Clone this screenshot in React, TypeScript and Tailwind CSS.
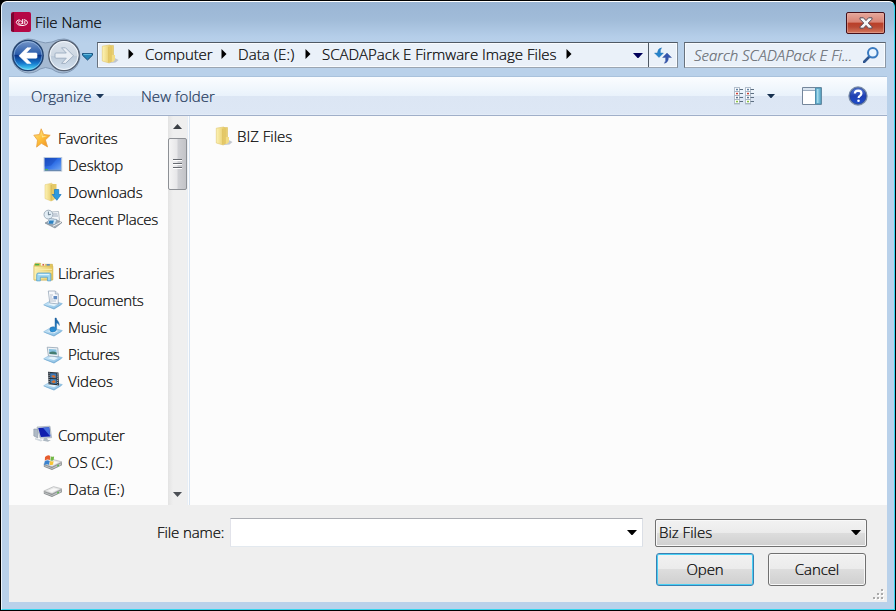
import type { ReactNode } from "react";

const P = ({ size = 20, children, className = "" }: { size?: number; children: ReactNode; className?: string }) => (
  <svg width={size} height={size} viewBox="0 0 20 20" className={"shrink-0 " + className}>
    {children}
  </svg>
);

const Defs = () => (
  <svg width="0" height="0" className="absolute">
    <defs>
      <linearGradient id="yellow" x1="0" x2="1">
        <stop offset="0" stopColor="#fdf3b5" />
        <stop offset="1" stopColor="#e3c45c" />
      </linearGradient>
      <linearGradient id="screen" x1="0" x2="1" y2="1">
        <stop offset="0" stopColor="#1c4fc4" />
        <stop offset="0.5" stopColor="#2f6fe6" />
        <stop offset="1" stopColor="#6fa6f5" />
      </linearGradient>
      <linearGradient id="star" x1="0" x2="1" y2="1">
        <stop offset="0" stopColor="#ffe98a" />
        <stop offset="0.5" stopColor="#fdbe3a" />
        <stop offset="1" stopColor="#f08a1c" />
      </linearGradient>
      <linearGradient id="tray" x1="0" x2="1" y2="1">
        <stop offset="0" stopColor="#d9effb" />
        <stop offset="1" stopColor="#7fb9e2" />
      </linearGradient>
      <linearGradient id="note" x1="0" x2="0" y2="1">
        <stop offset="0" stopColor="#1e5f9f" />
        <stop offset="1" stopColor="#2b95dc" />
      </linearGradient>
      <linearGradient id="orb" x1="0" x2="0" y2="1">
        <stop offset="0" stopColor="#7898c8" />
        <stop offset="0.46" stopColor="#2a5cab" />
        <stop offset="0.5" stopColor="#0b3488" />
        <stop offset="0.75" stopColor="#1578cd" />
        <stop offset="1" stopColor="#55e8ff" />
      </linearGradient>
      <linearGradient id="orbOff" x1="0" x2="0" y2="1">
        <stop offset="0" stopColor="#dbe3ec" />
        <stop offset="0.5" stopColor="#cdd7e2" />
        <stop offset="0.52" stopColor="#bccad9" />
        <stop offset="1" stopColor="#d5e2f0" />
      </linearGradient>
      <linearGradient id="help" x1="0" x2="0" y2="1">
        <stop offset="0" stopColor="#5e82dc" />
        <stop offset="0.5" stopColor="#1f3fb2" />
        <stop offset="1" stopColor="#1d4fd0" />
      </linearGradient>
    </defs>
  </svg>
);

const Folder = () => (
  <P>
    <path d="M11 12l7.5 4-3 2.5-5.5.5z" fill="#b0b7c1" opacity=".75" />
    <path d="M9 1.5h4.5V16l-3 1.5z" fill="#e9cf70" stroke="#d6b956" strokeWidth=".5" />
    <path d="M11 11h4v5l-2 2h-2z" fill="#f3dd86" />
    <path d="M2.3 2.2L9.5 1l2 1.6v14.8L9.2 19 2.3 17z" fill="url(#yellow)" stroke="#e0c66d" strokeWidth=".6" />
    <path d="M8.8 2.8V18.5" stroke="#d3b348" strokeWidth=".8" opacity=".7" />
  </P>
);
const Tray = () => (
  <>
    <path d="M1 15.6l7-4 11 3-8 5z" fill="#82b4d8" />
    <path d="M.6 14.8l7.4-4.3 11.4 3.1-8.4 5z" fill="url(#tray)" stroke="#79afd4" strokeWidth=".5" />
    <path d="M5 14.3l4-2.1 6 1.8-4 2.3z" fill="#f3fbff" opacity=".8" />
  </>
);

const icons: Record<string, ReactNode> = {
  star: <P><path d="M8.2.8l2.4 5.6 6.6.9-4.8 4.6 2.2 7-6.2-3.6-4.8 3.8.9-7L.8 7.2l5.6-.6z" fill="url(#star)" stroke="#e8a03e" strokeWidth=".8" /><path d="M8.4 3L9.6 8l4.6.5-5.2 1z" fill="#fff4b8" opacity=".7" /></P>,
  desktop: <P><rect x=".6" y="2" width="18.6" height="14.6" fill="#b9c9dc" /><rect x="1.7" y="3" width="16.4" height="11.8" fill="url(#screen)" /><path d="M1.7 3h13L8 10.4l-6.3 1z" fill="#143fae" opacity=".35" /><path d="M1.7 14.8h16.4v1H1.7z" fill="#557aa6" /><path d="M2 13.9h3v1.3H2z" fill="#50b266" /></P>,
  downloads: <P><path d="M9 2h4.5v14l-3 2z" fill="#e5ca69" /><path d="M2 2.7L8.5 1.2 10.5 3v15L8 19l-6-2.4z" fill="url(#yellow)" stroke="#e0c66d" strokeWidth=".5" /><path d="M8.2 3V18.5" stroke="#c9aa49" strokeWidth=".7" /><path d="M11.5 7.5h4.2v5h2.4l-4.3 5.8-4.6-5.8h2.3z" fill="#2c9ae1" stroke="#1776bd" strokeWidth=".7" /></P>,
  recent: <P><path d="M7 3l8.5-.5 1 9-8 1.5z" fill="#f4f7fa" stroke="#9aa6b3" strokeWidth=".7" /><path d="M10 5h4.5M10 7h5" stroke="#9caabc" /><circle cx="5.4" cy="5.6" r="4.4" fill="#e2edf5" stroke="#9aa8b6" strokeWidth=".9" /><path d="M5.4 2.6v3.3l2.4-.6" stroke="#5e7384" strokeWidth=".9" fill="none" /><path d="M2 14l8-4 9 3.5-7 5.5z" fill="#a2acb6" stroke="#6e7a86" strokeWidth=".6" /><path d="M4 14.5l2.5-5 7.5 1-2 5z" fill="#d2e6f4" stroke="#7a90a6" strokeWidth=".6" /><path d="M6.3 11.5h4.6l-.9 3.2H5.5z" fill="#2d81c1" /><path d="M10 17.2l8-4" stroke="#eee" /></P>,
  libraries: <P size={21}><path d="M1 3.2l1-2h5l1 1h10.5v15H1z" fill="#e5c961" stroke="#c9aa42" strokeWidth=".6" /><path d="M2 1.8h4v1.5H2z" fill="#45b34c" /><path d="M7.5 2h4v1.5h-4z" fill="#fff" /><path d="M9 2h1.6v1.4H9z" fill="#ce493b" /><path d="M13 2h3v1.5h-3z" fill="#5488cc" /><path d="M1 4h18v13H1z" fill="url(#yellow)" stroke="#d7b855" strokeWidth=".5" /><path d="M2 7h16M2 9.5h16" stroke="#f8eaa6" /><path d="M5 10.5h10.5q1.5 0 1.5 1.5v6h-3.2v-3.5H7V18H3.5v-6q0-1.5 1.5-1.5z" fill="#9bd4ef" stroke="#559fc9" strokeWidth=".7" /><path d="M5 12h10.5" stroke="#e2f7ff" /></P>,
  documents: <P><Tray /><path d="M5.3 1h7l3 3v10l-8.5-1z" fill="#f7f9fc" stroke="#8d9db2" strokeWidth=".7" /><path d="M12.3 1v3h3" fill="#dde4ed" stroke="#8d9db2" strokeWidth=".6" /><path d="M7 5h3M7 7h2M7 9h3M7 11h6" stroke="#a4b2c3" strokeWidth=".8" /><path d="M10.5 6h3.6v3.3h-3.6z" fill="#638dc3" /></P>,
  music: <P><Tray /><path d="M12 1h1.3c.2 3 3.3 3.3 3 7.5-.8-2-1.7-2.3-2.7-2.5V12q-.6 3-3.8 3-3 0-3-2.6t3.3-2.7q1.2 0 1.9.5z" fill="url(#note)" stroke="#1d639f" strokeWidth=".4" /></P>,
  pictures: <P><Tray /><path d="M4.2 3.2l10.6.6.6 9-10-.9z" fill="#eef3f7" stroke="#8799ab" strokeWidth=".7" /><path d="M5.8 5l7.6.4.4 5.2-7.2-.5z" fill="#85c0df" /><path d="M6.2 8.5q4-2 7.4.2l.2 1.9-7.2-.5z" fill="#457d71" /></P>,
  videos: <P><Tray /><path d="M5 .7l10.5.8.5 13-10.5-1.3z" fill="#29323b" /><path d="M7.2 2.2l6.2.4v4.6L7.3 7z" fill="#3f79b6" /><path d="M7.3 8l6.2.3.2 4.6-6.2-.7z" fill="#4185be" /><path d="M8 5l3-1 2 2-2 1zM8 11l3-2 2 2-2 1.3z" fill="#d8702d" /><path d="M6.1 1.7v11M14.6 2.5v11" stroke="#d8dee5" strokeWidth=".9" strokeDasharray="1 1.1" /></P>,
  computer: <P><path d="M.8 4h4v9l-4-2z" fill="#aeb9c5" stroke="#808d9c" strokeWidth=".5" /><path d="M4 2l13-.8 1.6 11.5-11.5.4z" fill="#ced8e1" stroke="#929eaa" strokeWidth=".6" /><path d="M5.2 3l11-.7 1.2 9.3-9.6.3z" fill="#111fae" /><path d="M10 2.7l6.2-.4 1.2 9.3z" fill="#4671dd" /><path d="M11 13h3l1 2h3l-3 1.8-5-1z" fill="#adb8c2" /><path d="M2 13l8 2-2 1.5-6-2z" fill="#d1d8de" /></P>,
  os: <P><Drive /><path d="M2 5q3-3 5.2-1.1L6.8 8.2Q4.5 6.8 1.8 8.8z" fill="#e65d2e" /><path d="M7.8 4.2q2 1 3.3 0l-.4 3.5Q9.6 9 7.4 8.3z" fill="#72b745" /><path d="M1.6 9.4q2.7-2 5-.5l-.5 4q-2.4-1.5-5 .5z" fill="#3b83cf" /><path d="M7.2 9.1q1.8 1 3.4-.2l-.5 3.6q-1.8 1-3.5.2z" fill="#f8c535" /></P>,
  drive: <P><Drive /></P>,
};
function Drive() {
  return (
    <>
      <path d="M.8 12.3L10.5 8l8.4 2.2v3.1L9 18l-8.2-3.2z" fill="#86898b" />
      <path d="M.8 12L10.5 7.6l8.4 2.2L9 14.8z" fill="#e5e6e6" stroke="#aeb0b1" strokeWidth=".6" />
      <path d="M5 11.8l5.7-2.6 4.4 1L9 13.2z" fill="#f8f8f8" />
      <path d="M1.3 12.9l7.6 3.1 9.3-4.9v2L9 17l-7.7-2.8z" fill="#bfc3c4" />
      <path d="M14 13.5l2-1v1.2l-2 1z" fill="#59bb4a" />
    </>
  );
}

type Row = [string, string, boolean, string] | null;
const rows: Row[] = [
  ["star", "Favorites", false, "w-[60px]"],
  ["desktop", "Desktop", true, "w-[55px]"],
  ["downloads", "Downloads", true, "w-[75px] tracking-[-0.05px]"],
  ["recent", "Recent Places", true, "w-[91px] tracking-[-0.2px]"],
  null,
  ["libraries", "Libraries", false, "w-[57px] tracking-[-0.22px]"],
  ["documents", "Documents", true, "w-[75px] tracking-[-0.25px]"],
  ["music", "Music", true, "w-[38px]"],
  ["pictures", "Pictures", true, "w-[51px] tracking-[-0.35px]"],
  ["videos", "Videos", true, "w-[45px] tracking-[0px]"],
  null,
  ["computer", "Computer", false, "w-[67px] tracking-[-0.2px]"],
  ["os", "OS (C:)", true, "w-[45px] tracking-[0px]"],
  ["drive", "Data (E:)", true, "w-[57px] tracking-[0.1px]"],
];

const Down = ({ color = "#000", w = 10, className = "" }: { color?: string; w?: number; className?: string }) => (
  <svg width={w} height={w / 2 + 0.5} viewBox="0 0 10 5.5" className={"shrink-0 " + className}><path d="M0 0h10L5 5.5z" fill={color} /></svg>
);
const Right = () => <svg width="6" height="10" viewBox="0 0 6 10" className="shrink-0"><path d="M.5 0v10L5.5 5z" fill="#000" /></svg>;

const ListGlyph = () => (
  <svg width="21" height="18" viewBox="0 0 21 18">
    {[0, 11].map((x) => (
      <g key={x}>
        <rect x={x + 0.5} y=".5" width="5" height="16.5" fill="#fafcfe" stroke="#b4bfcc" />
        {[2.5, 6.5, 10.5, 14.5].map((y, i) => (
          <g key={y}>
            <path d={`M${x} ${y + 2}h6`} stroke="#a9b6c5" />
            <rect x={x + 2} y={y - 0.7} width="2" height="1.5" fill={["#5e80a3", "#cf3f31", "#5c728c", "#8ac442"][i]} />
            <path d={`M${x + 5.5} ${y}h3.5`} stroke="#5d6f82" />
          </g>
        ))}
      </g>
    ))}
  </svg>
);

export default function App() {
  return (
    <div className="h-[611px] w-[896px] overflow-hidden bg-black p-px font-['Open_Sans','Noto_Sans',sans-serif] text-[15px] leading-5 font-light tracking-[-0.1px] text-black [-webkit-text-stroke:0.22px_currentColor]">
      <Defs />
      <div className="flex h-[609px] flex-col rounded-t-[6px] border-t border-r border-b border-l border-t-white border-r-[#35d5ee] border-b-[#35d5ee] border-l-[#edf4fb] bg-[#b9d1ea] bg-[linear-gradient(to_bottom,#9ab5d4_0px,#a1bcd9_18px,#b5cee9_35px,#b9d1ea_42px)] px-[7px] pb-[7px]">
        <header className="flex h-10 shrink-0 items-start pt-[10px] pl-[2px]">
          <svg width="20" height="20" viewBox="0 0 20 20" className="mr-1 shrink-0">
            <rect width="20" height="20" rx="2" fill="#b50845" /><path d="M0 2l3-2v20l-3-1z" fill="#79042f" />
            <path d="M8.5 7.6Q5.2 8.4 5.3 10.6q1 3 5.6 3 5.6-.4 5.6-3.2-.2-2.2-3.6-2.8" fill="none" stroke="#fff" strokeWidth="1" /><ellipse cx="9.4" cy="10.5" rx="1.9" ry="1.7" fill="none" stroke="#fff" strokeWidth=".9" /><path d="M11.7 7v5M13.8 9v3" stroke="#fff" strokeWidth="1" />
          </svg>
          <span className="w-[70px] whitespace-nowrap tracking-[0px]">File Name</span>
          <button className="mr-[2px] ml-auto flex h-[22px] w-[39px] items-center justify-center rounded-[2px] border border-[#45101a] bg-[linear-gradient(#e5a79c_0%,#d98475_46%,#ba3f28_50%,#b94934_70%,#d4785d_100%)] shadow-[inset_0_0_0_1px_#e9b1a588]">
            <svg width="14" height="12" viewBox="0 0 14 12"><path d="M1 .8h3.5L7 3.6 9.5.8H13v1.4L9.3 6 13 9.8v1.4H9.5L7 8.4l-2.5 2.8H1V9.8L4.7 6 1 2.2z" fill="#f7f7f7" stroke="#554b58" strokeWidth="1" /></svg>
          </button>
        </header>

        <nav className="flex h-[34px] shrink-0 items-start">
          <svg width="88" height="36" viewBox="0 0 88 36" className="-mt-[4px] shrink-0">
            <path d="M19 1Q25 1 30 3.5 36 6 43 4 49 1 55 1a17 17 0 1 1-12 30Q36 28 31 31A17 17 0 1 1 19 1z" fill="#a5bad2" stroke="#8299b5" strokeWidth="1" />
            <circle cx="19" cy="17.5" r="15.2" fill="url(#orb)" stroke="#23436f" strokeWidth="1.3" /><circle cx="19" cy="17.5" r="14" fill="none" stroke="#b9d9f5" strokeWidth=".7" opacity=".7" />
            <path d="M10 17.8l8-8h4L17.2 15H27q1 0 1 1v3.2q0 1-1 1h-9.8l4.8 5.2h-4z" fill="#fff" stroke="#fff" strokeWidth=".6" strokeLinejoin="round" />
            <circle cx="55" cy="17.5" r="15.2" fill="url(#orbOff)" stroke="#545f70" strokeWidth="1.3" /><circle cx="55" cy="17.5" r="14" fill="none" stroke="#f1f6fb" strokeWidth="1" />
            <path d="M64.5 17.8l-8-8h-4l4.8 5.2H47q-1 0-1 1v3.2q0 1 1 1h10.3l-4.8 5.2h4z" fill="#e9eef4" stroke="#9babbf" strokeWidth=".9" />
            <path d="M73.5 15.5h10v1.7L78.5 22l-5-4.8z" fill="#2685b8" stroke="#164c78" strokeWidth="1" /><path d="M74.5 16.3h8" stroke="#75c8ea" />
          </svg>
          <div className="flex h-[26px] w-[581px] shrink-0 items-center border border-t-[#4f5964] border-r-[#7f8b98] border-b-[#9ba6b2] border-l-[#68727e] bg-[#eaf1f9] pb-[2px] pl-[2px] shadow-[inset_0_0_0_1px_#f8fbfe]">
            <Folder />
            <span className="ml-[8px] flex"><Right /></span>
            <span className="ml-[11px] w-[67px] whitespace-nowrap">Computer</span>
            <span className="ml-[9px] flex"><Right /></span>
            <span className="ml-[11px] w-[57px] whitespace-nowrap tracking-[0.1px]">Data (E:)</span>
            <span className="ml-[10px] flex"><Right /></span>
            <span className="ml-[11px] w-[235px] whitespace-nowrap tracking-[0px]">SCADAPack E Firmware Image Files</span>
            <span className="ml-[9px] flex"><Right /></span>
            <Down color="#00005a" className="mt-[3px] mr-[5px] ml-auto" />
            <span className="-mb-[2px] flex h-[24px] w-[29px] items-center justify-center border-l border-[#4f5964]">
              <svg width="18" height="17" viewBox="0 0 18 17"><path d="M3.4 6Q3.8 1.4 7.6.8 5.8 3 6.4 6h3L5 10.5.5 6z" fill="#2583cb" stroke="#246eae" strokeWidth=".4" /><path d="M14.4 10.5q0 5-4 5.8 1.8-2.4 1.2-5.8H8.6L13 6l4.5 4.5z" fill="#3555ad" stroke="#304b98" strokeWidth=".4" /></svg>
            </span>
          </div>
          <div className="ml-[6px] flex h-[26px] w-[202px] shrink-0 items-center border border-t-[#5a6470] border-r-[#8a97a6] border-b-[#9ba6b2] border-l-[#68727e] bg-[#eaf1f9] pl-[9px] shadow-[inset_0_0_0_1px_#f8fbfe]">
            <span className="w-[159px] whitespace-nowrap text-[#666b72] italic tracking-[0px]">Search SCADAPack E Fi...</span>
            <svg width="16" height="16" viewBox="0 0 16 16" className="mr-[6px] ml-auto"><path d="M6.5 9.5L1 15" stroke="#2f5690" strokeWidth="2.6" strokeLinecap="round" /><circle cx="9.8" cy="5.8" r="4.8" fill="#e8f4ff" stroke="#397ac0" strokeWidth="2" /></svg>
          </div>
        </nav>

        <div className="flex h-[40px] shrink-0 items-center border-t border-b border-t-[#a9c2dc] border-b-[#a0afc9] bg-[linear-gradient(#fbfdff_0px,#e9f2fb_19px,#dce6f4_19px,#dde7f5_37px,#eaf1fa_38px)] pl-[22px] text-[#1e395b]">
          <span className="w-[61px] whitespace-nowrap tracking-[0px]">Organize</span>
          <Down w={8} color="#1e395b" className="ml-[4px]" />
          <span className="ml-[37px] w-[75px] whitespace-nowrap tracking-[0.05px]">New folder</span>
          <div className="mr-[19px] ml-auto flex items-center">
            <ListGlyph />
            <Down w={8} color="#16304f" className="ml-[12px]" />
            <svg width="20" height="18" viewBox="0 0 20 18" className="ml-[27px]"><path d="M.5.5h19v17H.5z" fill="#fff" stroke="#74869b" /><path d="M1 1h12v3H1z" fill="#d7e3ef" /><path d="M1 3.5h12" stroke="#9aabbe" /><path d="M13.5 1h5.5v16h-5.5z" fill="#6eb7d4" stroke="#4f8fae" /><path d="M15 2h1.5v14H15z" fill="#a4d9ea" /></svg>
            <svg width="20" height="20" viewBox="0 0 20 20" className="ml-[26px]"><circle cx="10" cy="10" r="9" fill="url(#help)" stroke="#7c8faa" strokeWidth="1.4" /><circle cx="10" cy="10" r="8.1" fill="none" stroke="#26418e" strokeWidth=".6" /><path d="M6.8 7.5Q7 4.7 10.2 4.7q3.2.1 3.2 2.8 0 1.4-1.5 2.4-1.3.8-1.3 2.1" fill="none" stroke="#fff" strokeWidth="2.2" /><circle cx="10.5" cy="14.7" r="1.3" fill="#fff" /></svg>
          </div>
        </div>

        <main className="flex h-[389px] shrink-0 bg-[#fcfcfc]">
          <aside className="w-[159px] pt-[8px] pl-[24px]">
            {rows.map((r, i) => r ? (
              <div key={i} className={"flex h-[27px] items-center whitespace-nowrap " + (r[2] ? "pl-[10px]" : "")}>
                <span className="flex w-5 shrink-0 justify-center">{icons[r[0]]}</span>
                <span className={"ml-[5px] shrink-0 whitespace-nowrap " + r[3]}>{r[1]}</span>
              </div>
            ) : <div key={i} className="h-[27px]" />)}
          </aside>
          <div className="flex w-5 flex-col items-center justify-between border-r border-r-[#e8eef5] bg-[linear-gradient(90deg,#e3e3e3,#efefef_5px)] pt-[8px] pb-[8px]">
            <div className="flex flex-col items-center gap-[9px]">
              <Down w={9} color="#3b3f45" className="rotate-180" />
              <div className="flex h-[52px] w-[19px] flex-col items-center justify-center gap-[2px] rounded-[2px] border border-[#8d9095] bg-[linear-gradient(90deg,#f5f5f5,#e7e7e9_45%,#cfd0d4_55%,#c2c3c7)]">
                {[0, 1, 2].map((n) => <div key={n} className="h-[2px] w-[9px] border-b border-white bg-[#666a70]" />)}
              </div>
            </div>
            <Down w={9} color="#4b4f55" />
          </div>
          <section className="ml-px flex flex-1 items-start border-l border-[#d8e4f1] pt-[10px] pl-[24px]">
            <Folder /><span className="ml-[3px] w-[56px] whitespace-nowrap tracking-[0px]">BIZ Files</span>
          </section>
        </main>

        <footer className="flex h-[97px] shrink-0 flex-col bg-[#efefef] pt-[13px] pl-[148px]">
          <div className="flex items-center">
            <span className="w-[73px] pb-[2px] whitespace-nowrap">File name:</span>
            <div className="flex h-[29px] w-[413px] items-center justify-end border border-t-[#abadb3] border-r-[#dbdfe6] border-b-[#e3e9ef] border-l-[#e2e3ea] bg-white pr-[5px]"><Down /></div>
            <div className="ml-3 flex h-[28px] w-[212px] items-center justify-between rounded-[2px] border border-[#707070] bg-[linear-gradient(#f2f2f2_0%,#ebebeb_48%,#dddddd_50%,#cfcfcf_100%)] pr-[5px] pl-[3px] shadow-[inset_0_0_0_1px_#f8f8f8]"><span className="pb-px tracking-[0px]">Biz Files</span><Down /></div>
          </div>
          <div className="mt-[6px] ml-[499px] flex gap-[14px]">
            <button className="h-[33px] w-[98px] rounded-[3px] border border-[#3c7fb1] bg-[linear-gradient(#f2f2f2_0%,#ebebeb_48%,#dddddd_50%,#cfcfcf_100%)] pb-[2px] shadow-[inset_0_0_0_1px_#48d0f5]">Open</button>
            <button className="h-[33px] w-[98px] rounded-[3px] border border-[#707070] bg-[linear-gradient(#f2f2f2_0%,#ebebeb_48%,#dddddd_50%,#cfcfcf_100%)] pb-[2px] shadow-[inset_0_0_0_1px_#f8f8f8]">Cancel</button>
          </div>
          <svg width="12" height="12" viewBox="0 0 12 12" className="mt-[3px] mr-[2px] ml-auto shrink-0">
            {[[8, 0], [4, 4], [8, 4], [0, 8], [4, 8], [8, 8]].map(([x, y]) => <g key={`${x}-${y}`}><rect x={x + 1} y={y + 1} width="2" height="2" fill="#fff" /><rect x={x} y={y} width="2" height="2" fill="#aaa" /></g>)}
          </svg>
        </footer>
      </div>
    </div>
  );
}
